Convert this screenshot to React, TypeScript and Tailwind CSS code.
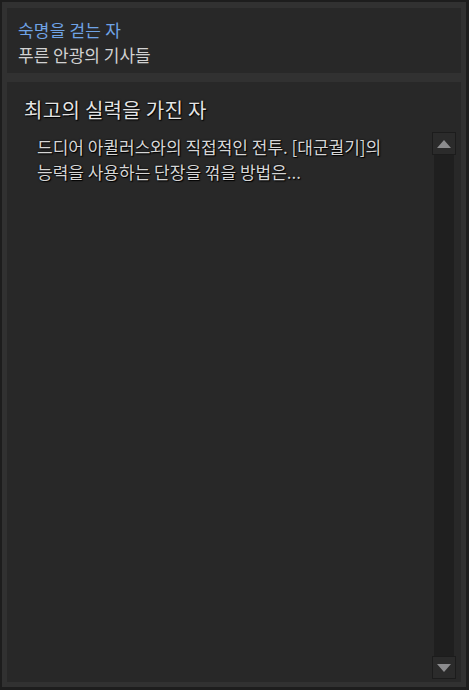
const font = { fontFamily: '"Noto Sans CJK KR", "Noto Sans", sans-serif' };

function ScrollButton({ dir }: { dir: 'up' | 'down' }) {
  return (
    <div className="flex h-[23px] w-[24px] items-center justify-center border border-[#1c1c1c] bg-[#2b2b2b]">
      <svg width="16" height="10" viewBox="0 0 16 10">
        {dir === 'up' ? (
          <polygon points="8,1 15,9 1,9" fill="#8c8c8e" />
        ) : (
          <polygon points="1,1 15,1 8,9" fill="#8c8c8e" />
        )}
      </svg>
    </div>
  );
}

export default function App() {
  return (
    <div
      className="h-[690px] w-[469px] bg-[#1d1d1d] pt-[2px] pl-[2px] pr-[3px] pb-[3px]"
      style={font}
    >
      <div className="flex h-full flex-col gap-[9px] bg-[#313131] pt-[6px] pl-[5px] pr-[5px] pb-[5px]">
        <div className="h-[65px] bg-[#282828] pl-[11px] pt-[10px]">
          <div className="text-[17px] leading-[24px] tracking-[0.2px] text-[#6fa3e6]">숙명을 걷는 자</div>
          <div className="mt-[1px] text-[17px] leading-[24px] text-[#d2d2d2]">푸른 안광의 기사들</div>
        </div>

        <div className="flex flex-1 flex-col bg-[#282828] pt-[15px] pb-[3px]">
          <div className="pl-[17px] text-[20px] leading-[26px] tracking-[0.3px] text-[#e4e4e4] [text-shadow:0_0_2px_#000,1px_1px_1px_#000]">
            최고의 실력을 가진 자
          </div>
          <div className="mt-[9px] flex flex-1">
            <div className="flex-1 pl-[30px] pr-[20px] pt-[2px] text-[17px] leading-[25px] text-[#d6d6d6] [text-shadow:0_0_2px_#000,1px_1px_1px_#000]">
              드디어 아퀼러스와의 직접적인 전투. [대군궐기]의
              <br />
              능력을 사용하는 단장을 꺾을 방법은...
            </div>
            <div className="mr-[5px] flex w-[24px] flex-col">
              <ScrollButton dir="up" />
              <div className="mx-auto w-[20px] flex-1 bg-[#1f1f1f]" />
              <ScrollButton dir="down" />
            </div>
          </div>
        </div>
      </div>
    </div>
  );
}
